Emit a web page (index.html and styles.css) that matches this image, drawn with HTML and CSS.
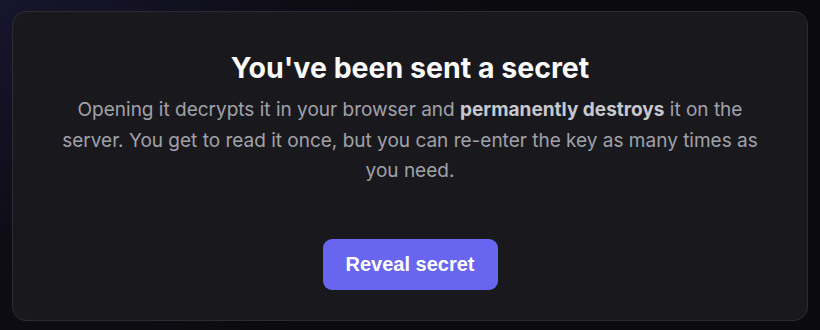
FILE: index.html
```html
<!DOCTYPE html>
<html lang="en">
<head>
    <meta charset="UTF-8">
    <meta name="viewport" content="width=device-width, initial-scale=1.0">
    <title>Secret</title>
    <link rel="stylesheet" href="styles.css">
</head>
<body>

    <div class="card">
        <h1 class="title">You've been sent a secret</h1>
        <p class="text">
            Opening it decrypts it in your browser and <strong>permanently destroys</strong> it on the
            server. You get to read it once, but you can re-enter the key as many times as
            you need.
        </p>
        <button class="reveal-btn">Reveal secret</button>
    </div>

</body>
</html>
```

FILE: styles.css
```css
html, body {
    height: 100%;
}

body {
    font-family: Inter, "Noto Sans", sans-serif;
    margin: 0;
    padding: 11px 12px 9px;
    box-sizing: border-box;
    background: radial-gradient(ellipse 60% 120% at 0% 0%, #17152d 0%, #0e0d16 60%, #0b0b0f 100%);
}

.card {
    height: 100%;
    box-sizing: border-box;
    background-color: #19191d;
    border: 1px solid #2b2b31;
    border-radius: 14px;
    display: flex;
    flex-direction: column;
    align-items: center;
    padding: 37px 46px 0;
    text-align: center;
}

.title {
    margin: 0;
    color: #fafafa;
    font-size: 28.5px;
    font-weight: 700;
    line-height: 38px;
}

.text {
    margin: 8px 0 0;
    color: #a1a1aa;
    font-size: 19px;
    line-height: 30.5px;
}

.text strong {
    color: #c8c8cf;
    font-weight: 700;
}

.reveal-btn {
    margin-top: 52px;
    width: 175px;
    height: 51px;
    border: none;
    border-radius: 9px;
    background-color: #6865f0;
    color: white;
    font-family: "Liberation Sans", Arial, sans-serif;
    font-size: 20px;
    font-weight: 700;
    cursor: pointer;
}
```
